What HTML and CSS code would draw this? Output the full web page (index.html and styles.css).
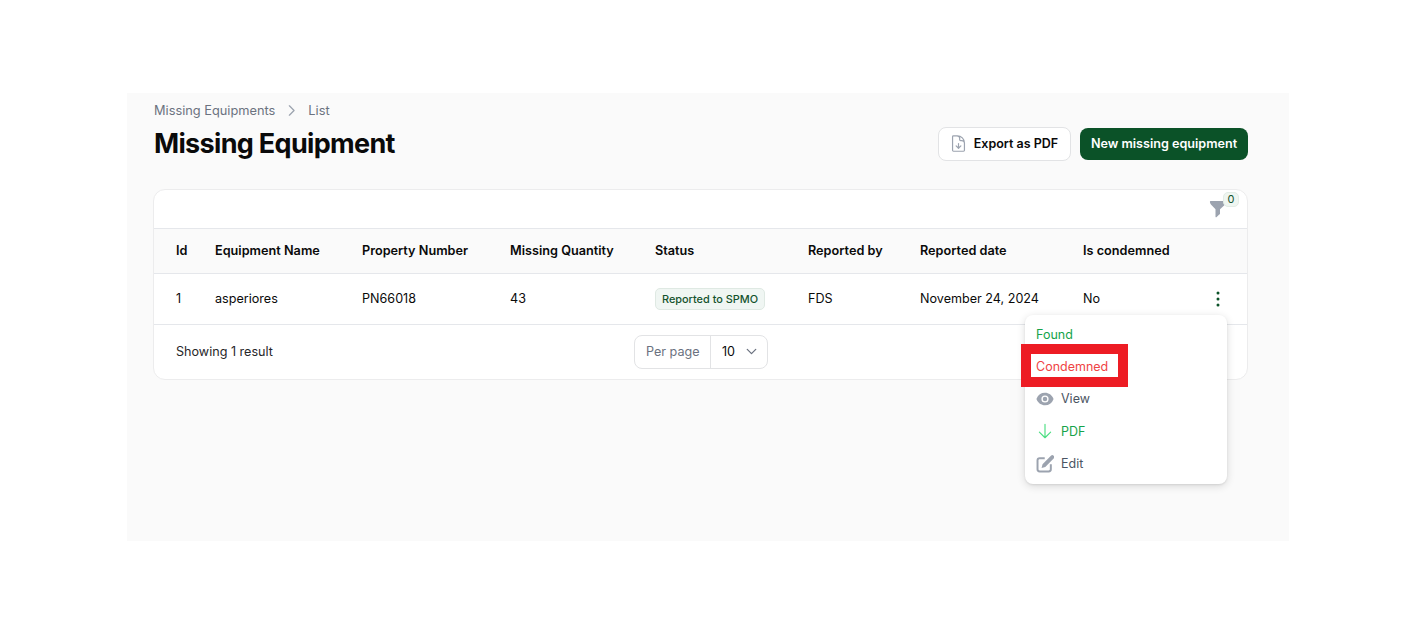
FILE: index.html
```html
<!DOCTYPE html>
<html lang="en">
<head>
<meta charset="utf-8">
<title>Missing Equipment</title>
<link rel="stylesheet" href="styles.css">
</head>
<body>
<main class="panel">
  <nav class="crumbs">
    <span>Missing Equipments</span>
    <svg class="crumb-sep" viewBox="0 0 20 20" fill="none" stroke="currentColor" stroke-width="1.5"><path d="M7.5 4.5 13 10l-5.5 5.5" stroke-linecap="round" stroke-linejoin="round"/></svg>
    <span>List</span>
  </nav>
  <header class="head">
    <h1>Missing Equipment</h1>
    <div class="actions">
      <button class="btn btn-light">
        <svg class="btn-icon" viewBox="0 0 24 24" fill="none" stroke="#9ca3af" stroke-width="1.5"><path d="M19.5 14.25v-2.6A3.4 3.4 0 0 0 16.1 8.25h-1.5a1.1 1.1 0 0 1-1.1-1.1v-1.5A3.4 3.4 0 0 0 10.1 2.25H8.25M9 2.25H5.6c-.6 0-1.1.5-1.1 1.1v17.3c0 .6.5 1.1 1.1 1.1h12.8c.6 0 1.1-.5 1.1-1.1V11.25a9 9 0 0 0-9-9H9Z" stroke-linejoin="round"/><path d="m9 15 3 3 3-3M12 18v-6" stroke-linecap="round" stroke-linejoin="round"/></svg>
        Export as PDF
      </button>
      <button class="btn btn-dark">New missing equipment</button>
    </div>
  </header>
  <section class="card">
    <div class="toolbar">
      <div class="filter">
        <svg class="funnel" viewBox="0 0 20 20" fill="#9ca3af"><path d="M2.6 2h14.8c.5 0 .8.4.7.9-.2 1.3-1 2.6-2 3.6L12 10.2V15l-1 .8-2.6 2.4c-.3.3-.9.1-.9-.4v-7.6L3.9 6.5c-1-1-1.8-2.300-2-3.600-.1-.5.200-.9.700-.9Z"/></svg>
        <span class="filter-count">0</span>
      </div>
    </div>
    <table class="grid">
      <colgroup>
        <col class="c1"><col class="c2"><col class="c3"><col class="c4"><col class="c5"><col class="c6"><col class="c7"><col class="c8"><col>
      </colgroup>
      <thead>
        <tr>
          <th>Id</th><th>Equipment Name</th><th>Property Number</th><th>Missing Quantity</th><th>Status</th><th>Reported by</th><th>Reported date</th><th>Is condemned</th><th></th>
        </tr>
      </thead>
      <tbody>
        <tr>
          <td>1</td>
          <td>asperiores</td>
          <td>PN66018</td>
          <td>43</td>
          <td><span class="badge">Reported to SPMO</span></td>
          <td>FDS</td>
          <td>November 24, 2024</td>
          <td>No</td>
          <td class="more-cell">
            <svg class="more" viewBox="0 0 20 20" fill="#0b5228"><circle cx="10" cy="4" r="1.500"/><circle cx="10" cy="10" r="1.500"/><circle cx="10" cy="16" r="1.500"/></svg>
          </td>
        </tr>
      </tbody>
    </table>
    <footer class="foot">
      <span class="showing">Showing 1 result</span>
      <div class="perpage">
        <span class="perpage-label">Per page</span>
        <span class="perpage-value">10
          <svg class="chev" viewBox="0 0 20 20" fill="none" stroke="#6b7280" stroke-width="1.500"><path d="m5 7.500 5 5 5-5" stroke-linecap="round" stroke-linejoin="round"/></svg>
        </span>
      </div>
    </footer>
  </section>
</main>
<div class="menu">
  <div class="item item-plain green">Found</div>
  <div class="item item-plain red">Condemned</div>
  <div class="item">
    <svg class="item-icon" viewBox="0 0 20 20" fill="#9ca3af"><path d="M10 12.500a2.500 2.500 0 1 0 0-5 2.500 2.500 0 0 0 0 5Z"/><path fill-rule="evenodd" d="M.7 10.600a1.200 1.200 0 0 1 0-1.190A10 10 0 0 1 10 3c4.200 0 7.800 2.600 9.300 6.400.150.400.150.800 0 1.190A10 10 0 0 1 10 17C5.800 17 2.200 14.400.7 10.600ZM14 10a4 4 0 1 1-8 0 4 4 0 0 1 8 0Z"/></svg>
    <span>View</span>
  </div>
  <div class="item green">
    <svg class="item-icon" viewBox="0 0 24 24" fill="none" stroke="#4ade80" stroke-width="1.500"><path d="M19.500 13.500 12 21l-7.500-7.500M12 21V3" stroke-linecap="round" stroke-linejoin="round"/></svg>
    <span>PDF</span>
  </div>
  <div class="item">
    <svg class="item-icon" viewBox="2 1.500 16.500 16.500" fill="#9ca3af"><path d="M5.400 3.500h4.600v1.800H5.400c-.600 0-1.100.500-1.100 1.100v8.200c0 .600.500 1.100 1.100 1.100h8.200c.600 0 1.100-.500 1.100-1.100V10h1.800v4.600a2.900 2.900 0 0 1-2.900 2.900H5.400a2.900 2.900 0 0 1-2.900-2.900V6.400a2.900 2.900 0 0 1 2.900-2.900Z"/><path d="M15.900 1.900a1.800 1.800 0 0 1 2.500 2.500l-7.900 8.100-3.400.9.900-3.400 7.900-8.100Z"/></svg>
    <span>Edit</span>
  </div>
</div>
<div class="callout"><span class="callout-text">Condemned</span></div>
</body>
</html>
```

FILE: styles.css
```css
* { box-sizing: border-box; }
html, body { margin: 0; padding: 0; background: #fff; }
body {
  height: 633px;
  overflow: hidden;
  font-family: Inter, "Liberation Sans", sans-serif;
  font-size: 13px;
  color: #0a0a0a;
  position: relative;
}
.panel {
  width: 1162px;
  height: 448px;
  margin: 93px 0 0 127px;
  padding: 8px 41px 0 27px;
  background: #fafafa;
}
.crumbs {
  display: flex;
  align-items: center;
  gap: 8px;
  height: 18px;
  font-size: 12.800px;
  color: #6b7280;
}
.crumb-sep { width: 17px; height: 17px; color: #9ca3af; }
.head {
  display: flex;
  justify-content: space-between;
  align-items: center;
  margin-top: 7px;
  height: 36px;
}
h1 {
  margin: 0;
  font-size: 27px;
  line-height: 36px;
  font-weight: 700;
  letter-spacing: -0.68px;
}
.actions { display: flex; gap: 9px; }
.btn {
  display: inline-flex;
  align-items: center;
  justify-content: center;
  height: 34px;
  border-radius: 8px;
  font: 600 12.500px Inter, "Liberation Sans", sans-serif;
  border: 1px solid transparent;
}
.btn-light {
  width: 133px;
  gap: 6px;
  padding-bottom: 2px;
  background: #fff;
  border-color: #e2e3e5;
  color: #0a0a0a;
}
.btn-dark {
  width: 168px;
  height: 32px;
  margin-top: 1px;
  padding-bottom: 2px;
  background: #0b5228;
  color: #fff;
  font-size: 12.600px;
}
.btn-icon { width: 19px; height: 19px; margin-left: -2px; }
.card {
  margin: 27px 0 0 -1px;
  width: 1095px;
  height: 191px;
  background: #fff;
  border: 1px solid #ececed;
  border-radius: 12px;
}
.toolbar {
  height: 39px;
  display: flex;
  justify-content: flex-end;
  border-bottom: 1px solid #e5e7eb;
}
.filter { position: relative; width: 20px; height: 20px; margin: 9px 19px 0 0; }
.funnel { width: 20px; height: 20px; display: block; }
.filter-count {
  position: absolute;
  left: 15px;
  top: -7px;
  width: 16px;
  height: 15px;
  border-radius: 5px;
  background: #eff6f1;
  border: 1px solid #e3ece6;
  font-size: 11px;
  line-height: 13px;
  text-align: center;
  color: #14532d;
}
.grid { width: 100%; border-collapse: collapse; table-layout: fixed; }
.c1 { width: 61px; } .c2 { width: 147px; } .c3 { width: 148px; } .c4 { width: 145px; }
.c5 { width: 153px; } .c6 { width: 112px; } .c7 { width: 163px; } .c8 { width: 110px; }
.grid th {
  height: 44px;
  padding: 0 0 0 22px;
  background: #fafafa;
  font-size: 12.700px;
  font-weight: 600;
  text-align: left;
  border-bottom: 1px solid #e5e7eb;
}
.grid th:not(:first-child), .grid td:not(:first-child) { padding-left: 0; }
.grid td {
  height: 51px;
  padding: 0 0 0 22px;
  font-size: 12.600px;
  border-bottom: 1px solid #e5e7eb;
}
.badge {
  display: inline-block;
  height: 22px;
  padding: 0 6px;
  border: 1px solid #dfe9e3;
  border-radius: 5px;
  background: #f0f6f3;
  color: #14532d;
  font-size: 10.900px;
  font-weight: 500;
  line-height: 20px;
}
.more-cell { text-align: left; }
.more { width: 20px; height: 20px; display: block; margin-left: 15px; }
.foot {
  position: relative;
  height: 54px;
  display: flex;
  align-items: center;
  padding-left: 22px;
}
.showing { font-size: 12.600px; color: #27272a; margin-top: -1px; }
.perpage {
  position: absolute;
  left: 480px;
  top: 10px;
  display: flex;
  width: 134px;
  height: 34px;
  border: 1px solid #e2e3e5;
  border-radius: 8px;
  font-size: 12.600px;
  align-items: center;
}
.perpage-label {
  width: 76px;
  height: 100%;
  display: flex;
  align-items: center;
  padding-left: 11px;
  color: #6b7280;
  border-right: 1px solid #e2e3e5;
}
.perpage-value { display: flex; align-items: center; padding-left: 11px; gap: 8px; color: #0a0a0a; }
.chev { width: 17px; height: 17px; }
.menu {
  position: absolute;
  left: 1025px;
  top: 315px;
  width: 202px;
  height: 169px;
  padding-top: 3px;
  background: #fff;
  border-radius: 8px;
  box-shadow: 0 1px 2px rgba(0,0,0,.08), 0 2px 8px rgba(0,0,0,.14);
  font-size: 12.500px;
  color: #4b5563;
}
.item {
  display: flex;
  align-items: center;
  gap: 7px;
  height: 32.400px;
  padding-left: 11px;
}
.item-plain { padding-left: 11px; }
.item-icon { width: 18px; height: 18px; }
.green { color: #16a34a; }
.red { color: #dc2626; }
.callout {
  position: absolute;
  left: 1021px;
  top: 344px;
  width: 107px;
  height: 43px;
  border: 10px solid #ed1c24;
  background: #fff;
  display: flex;
  align-items: center;
  padding: 2px 0 0 5px;
}
.callout-text { font-size: 12.500px; color: #ef4444; }
```
